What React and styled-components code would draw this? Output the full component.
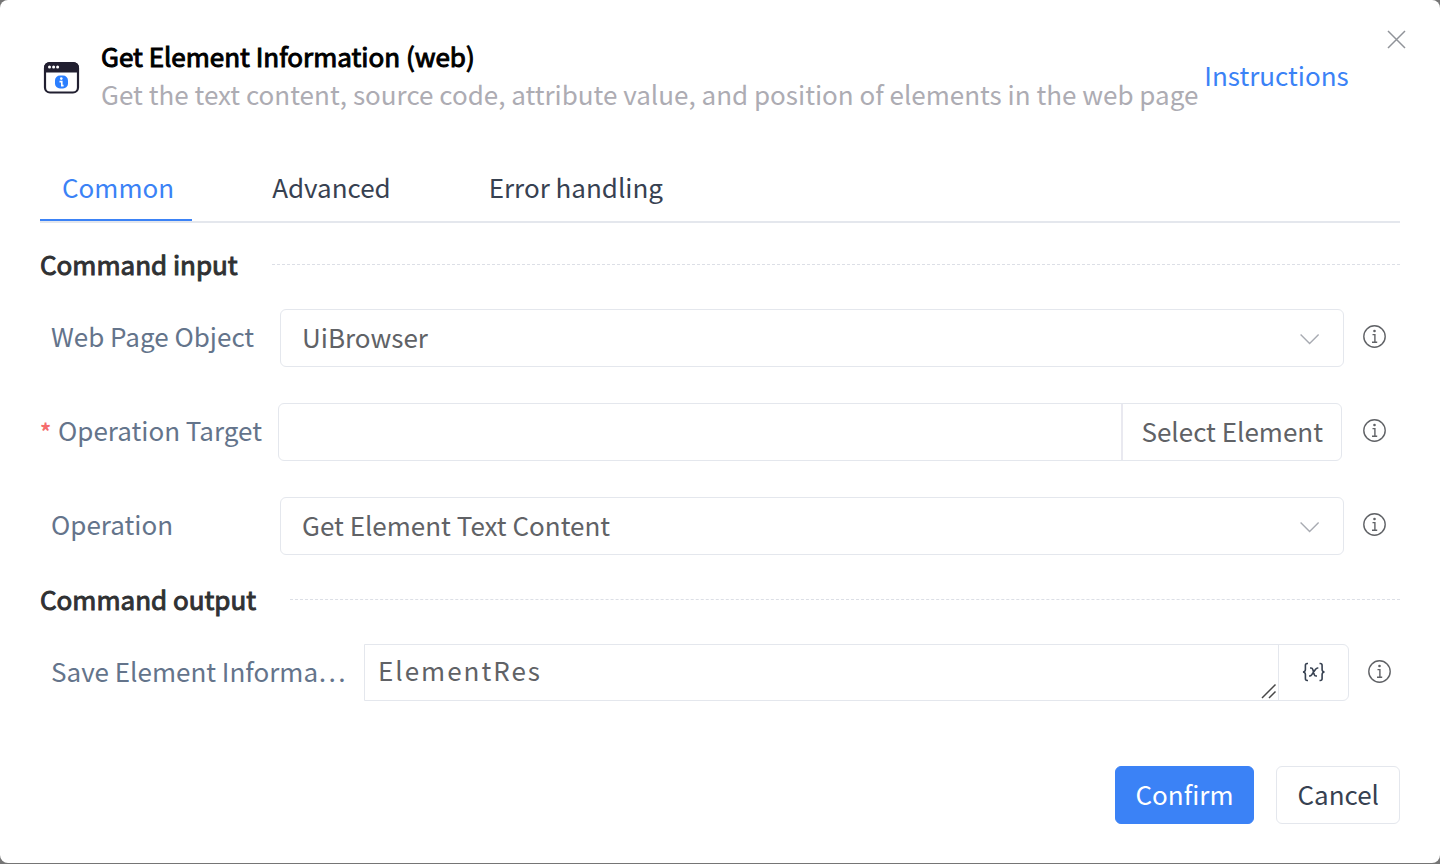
import { useState } from 'react'
import styled, { createGlobalStyle } from 'styled-components'

const GlobalStyle = createGlobalStyle`
  * {
    box-sizing: border-box;
  }

  body {
    margin: 0;
    background: #757575;
  }

  body, button, input, select, textarea {
    font-family: 'Noto Sans CJK SC', 'Noto Sans', sans-serif;
    font-size: 26px;
    line-height: 38px;
  }
`;

const Backdrop = styled.div`
  display: flex;
  min-height: 100vh;
  padding-bottom: 1px;
  background: #757575;
`;

const Dialog = styled.main`
  position: relative;
  display: flex;
  flex: 1;
  flex-direction: column;
  min-width: 0;
  padding: 37px 40px 39px;
  border-radius: 8px;
  background: #fff;
`;

const CloseButton = styled.button`
  position: absolute;
  top: 24px;
  right: 28px;
  display: flex;
  padding: 6px;
  border: 0;
  background: none;
  color: #909399;
  cursor: pointer;
`;

const Header = styled.header`
  display: flex;
  align-items: center;
  padding-left: 3px;
`;

const AppIcon = styled.svg`
  flex: none;
  margin-top: 5px;
`;

const HeaderText = styled.div`
  margin: 0 6px 0 21px;
  white-space: nowrap;
`;

const Title = styled.h1`
  margin: 0;
  color: #000;
  font-size: 26px;
  font-weight: 400;
  -webkit-text-stroke: 1px currentColor;
`;

const Description = styled.p`
  margin: 0;
  color: #adacb3;
`;

const DocLink = styled.a`
  color: #3b82f6;
  text-decoration: none;
`;

const TabList = styled.div`
  display: flex;
  gap: 58px;
  margin-top: 55px;
  border-bottom: 2px solid #e4e7ed;
`;

const Tab = styled.button`
  height: 53px;
  padding: 0 18px 18px 22px;
  border: 0;
  border-bottom: 2px solid ${props => props.$active ? '#3b82f6' : 'transparent'};
  background: none;
  color: ${props => props.$active ? '#3b82f6' : '#374151'};
  white-space: nowrap;
  cursor: pointer;
`;

const SectionTitle = styled.h2`
  display: flex;
  align-items: center;
  gap: 34px;
  margin: ${props => props.$top}px 0 26px;
  color: #303133;
  font-size: 26px;
  font-weight: 400;
  -webkit-text-stroke: 1px currentColor;

  &::after {
    content: '';
    flex: 1;
    border-top: 1px dashed #dcdfe6;
  }
`;

const Form = styled.form`
  display: flex;
  flex: 1;
  flex-direction: column;
`;

const Rows = styled.div`
  display: flex;
  flex-direction: column;
  gap: 36px;
`;

const Row = styled.div`
  display: flex;
  align-items: center;
  padding-right: ${props => props.$end || 13}px;
`;

const Label = styled.label`
  display: flex;
  flex: none;
  width: ${props => props.$width || 240}px;
  padding-left: ${props => props.$required ? 0 : 11}px;
  padding-bottom: 4px;
  color: #64748b;
  white-space: nowrap;
`;

const Star = styled.span`
  width: 18px;
  color: #f56c6c;
  font-size: 22px;
  font-weight: 700;
`;

const Field = styled.div`
  position: relative;
  display: flex;
  flex: 1;
  min-width: 0;
  height: ${props => props.$squareLeft ? 57 : 58}px;
  border: 1px solid #e4e7ed;
  border-radius: ${props => props.$squareLeft ? '0 6px 6px 0' : '6px'};
`;

const Select = styled.select`
  width: 100%;
  padding: 0 60px 2px 21px;
  border: 0;
  border-radius: 6px;
  background: none;
  color: #606266;
  appearance: none;
  outline: none;
`;

const Chevron = styled.svg`
  position: absolute;
  top: 23px;
  right: 23px;
  pointer-events: none;
`;

const TextInput = styled.input`
  flex: 1;
  min-width: 0;
  padding: 0 20px;
  border: 0;
  background: none;
  color: #606266;
  outline: none;
`;

const SelectElementButton = styled.button`
  padding: 0 18px 2px;
  border: 0;
  border-left: 2px solid #e9e9f0;
  background: none;
  color: #606266;
  white-space: nowrap;
  cursor: pointer;
`;

const TextArea = styled.textarea`
  flex: 1;
  min-width: 0;
  padding: 6px 13px;
  border: 0;
  background: none;
  color: #606266;
  letter-spacing: 2px;
  outline: none;
  resize: none;
`;

const ResizeHandle = styled.svg`
  position: absolute;
  right: 71px;
  bottom: 1px;
  pointer-events: none;
`;

const VariableButton = styled.button`
  display: flex;
  align-items: center;
  justify-content: center;
  width: 70px;
  padding: 0 0 2px;
  border: 0;
  border-left: 1px solid #e4e7ed;
  background: none;
  color: #374151;
  cursor: pointer;
`;

const HelpButton = styled.button`
  display: flex;
  margin-left: ${props => props.$gap || 19}px;
  padding: 0 0 2px;
  border: 0;
  background: none;
  color: #606266;
  cursor: pointer;
`;

const Footer = styled.footer`
  display: flex;
  justify-content: flex-end;
  gap: 22px;
  margin-top: auto;
`;

const Button = styled.button`
  height: 58px;
  padding: 0 20px 2px;
  border: 1px solid ${props => props.$primary ? '#3b82f6' : '#e4e7ed'};
  border-radius: 6px;
  background: ${props => props.$primary ? '#3b82f6' : '#fff'};
  color: ${props => props.$primary ? '#fff' : '#374151'};
  cursor: pointer;
`;

function WindowIcon() {
  return (
    <AppIcon width="37" height="36" viewBox="0 0 37 36" aria-hidden="true">
      <rect x="2" y="3" width="33" height="29.500" rx="5" fill="#fff" stroke="#211f30" strokeWidth="2.200" />
      <path d="M1 12.500V7.500A5.500 5.500 0 0 1 6.500 2h24A5.500 5.500 0 0 1 36 7.500V12.500z" fill="#211f30" />
      <circle cx="6.500" cy="7" r="1.500" fill="#fff" />
      <circle cx="10.600" cy="7" r="1.500" fill="#fff" />
      <circle cx="14.600" cy="7" r="1.500" fill="#fff" />
      <rect x="12" y="15.500" width="13" height="13" rx="5" fill="#2b7fff" />
      <circle cx="18.300" cy="18.600" r="1.300" fill="#fff" />
      <path d="M16.500 21.600h2.300v4M18 25.600h2.600" fill="none" stroke="#fff" strokeWidth="1.600" />
    </AppIcon>
  );
}

function InfoIcon() {
  return (
    <svg width="24" height="24" viewBox="0 0 24 24" fill="none" stroke="currentColor" strokeWidth="1.400" aria-hidden="true">
      <circle cx="11.500" cy="11.500" r="10.700" />
      <path d="M9.500 9.600h2.400v7.500M9 17.200h5.200" />
      <circle cx="11.500" cy="6" r="1.300" fill="currentColor" stroke="none" />
    </svg>
  );
}

function DownIcon() {
  return (
    <Chevron width="20" height="12" viewBox="0 0 20 12" fill="none" stroke="#a8abb2" strokeWidth="1.400" aria-hidden="true">
      <path d="M.600 1.500l9 9 9-9" />
    </Chevron>
  );
}

function VariableIcon() {
  return (
    <svg width="24" height="20" viewBox="0 0 24 20" fill="none" stroke="currentColor" strokeWidth="1.600" aria-hidden="true">
      <path d="M6 1.500H5.200Q3.400 1.500 3.400 3.500V7.500Q3.400 9.800 1 10Q3.400 10.200 3.400 12.500V16.500Q3.400 18.500 5.200 18.500H6" />
      <path d="M17.500 1.500h.8q1.800 0 1.800 2v4q0 2.300 2.400 2.500q-2.400.2-2.400 2.500v4q0 2-1.800 2h-.8" />
      <path d="M8 6h1q1.400 0 1.900 1.800l1.200 4.400Q12.600 14 14 14h1M16.300 6h-.7q-1 0-2 1.300L9.700 12.700Q8.700 14 7.700 14H7" />
    </svg>
  );
}

function Help({ name, gap }) {
  return (
    <HelpButton type="button" aria-label={`About ${name}`} $gap={gap}>
      <InfoIcon />
    </HelpButton>
  );
}

const tabs = ['Common', 'Advanced', 'Error handling'];

function App() {
  const [tab, setTab] = useState('Common');

  return (
    <>
      <GlobalStyle />
      <Backdrop>
        <Dialog>
          <CloseButton type="button" aria-label="Close">
            <svg width="19" height="19" viewBox="0 0 19 19" fill="none" stroke="currentColor" strokeWidth="1.500" aria-hidden="true">
              <path d="M1 1l17 17M18 1L1 18" />
            </svg>
          </CloseButton>
          <Header>
            <WindowIcon />
            <HeaderText>
              <Title>Get Element Information (web)</Title>
              <Description>Get the text content, source code, attribute value, and position of elements in the web page</Description>
            </HeaderText>
            <DocLink href="#instructions">Instructions</DocLink>
          </Header>
          <TabList role="tablist">
            {tabs.map(name => (
              <Tab key={name} type="button" role="tab" aria-selected={tab === name} $active={tab === name} onClick={() => setTab(name)}>
                {name}
              </Tab>
            ))}
          </TabList>
          <Form onSubmit={e => e.preventDefault()}>
            <SectionTitle $top={22}>Command input</SectionTitle>
            <Rows>
              <Row>
                <Label htmlFor="page">Web Page Object</Label>
                <Field>
                  <Select id="page" defaultValue="UiBrowser">
                    <option>UiBrowser</option>
                  </Select>
                  <DownIcon />
                </Field>
                <Help name="Web Page Object" />
              </Row>
              <Row>
                <Label htmlFor="target" $required $width={238}><Star>*</Star>Operation Target</Label>
                <Field>
                  <TextInput id="target" type="text" />
                  <SelectElementButton type="button">Select Element</SelectElementButton>
                </Field>
                <Help name="Operation Target" gap={21} />
              </Row>
              <Row>
                <Label htmlFor="operation">Operation</Label>
                <Field>
                  <Select id="operation" defaultValue="Get Element Text Content">
                    <option>Get Element Text Content</option>
                  </Select>
                  <DownIcon />
                </Field>
                <Help name="Operation" />
              </Row>
            </Rows>
            <SectionTitle $top={25}>Command output</SectionTitle>
            <Row $end={8}>
              <Label htmlFor="result" $width={324}>Save Element Informa…</Label>
              <Field $squareLeft>
                <TextArea id="result" rows={1} defaultValue="ElementRes" />
                <ResizeHandle width="16" height="16" viewBox="0 0 16 16" fill="none" stroke="#484848" strokeWidth="1.500" aria-hidden="true">
                  <path d="M1 15L14.500 1.500M8 15l6.500-6.500" />
                </ResizeHandle>
                <VariableButton type="button" aria-label="Insert variable">
                  <VariableIcon />
                </VariableButton>
              </Field>
              <Help name="Save Element Information" />
            </Row>
            <Footer>
              <Button type="submit" $primary>Confirm</Button>
              <Button type="button">Cancel</Button>
            </Footer>
          </Form>
        </Dialog>
      </Backdrop>
    </>
  );
}

export default App;
